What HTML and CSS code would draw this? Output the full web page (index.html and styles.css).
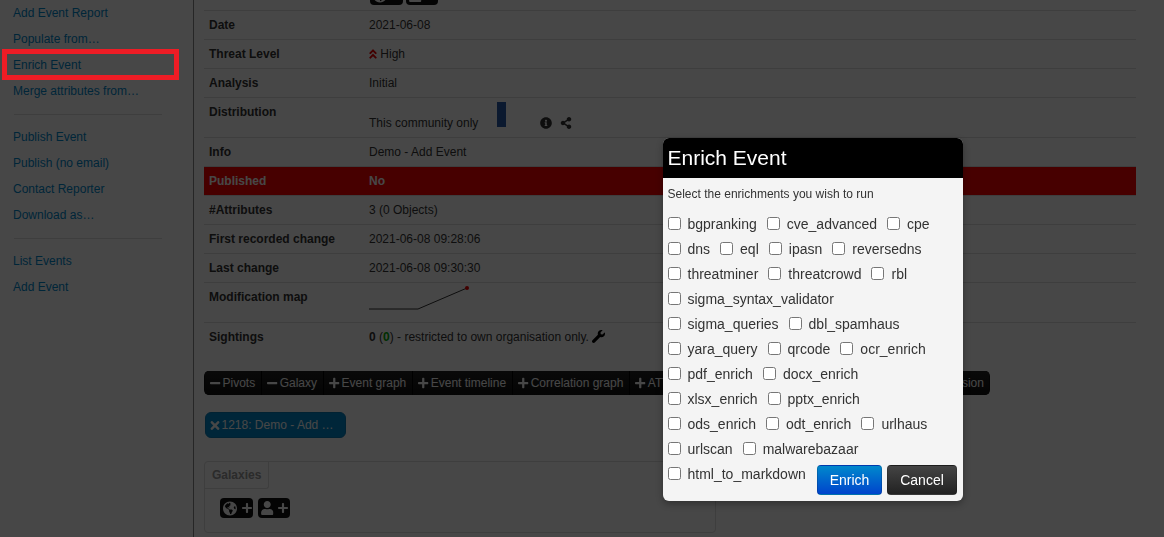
FILE: index.html
```html
<!DOCTYPE html>
<html lang="en">
<head>
<meta charset="utf-8">
<title>Enrich Event</title>
<link rel="stylesheet" href="styles.css">
</head>
<body>
<svg class="sprite" xmlns="http://www.w3.org/2000/svg">
  <symbol id="i-times" viewBox="0 0 352 512"><path d="M242.72 256l100.07-100.07c12.28-12.28 12.28-32.19 0-44.48l-22.24-22.24c-12.28-12.28-32.19-12.28-44.48 0L176 189.28 75.93 89.21c-12.28-12.28-32.19-12.28-44.48 0L9.21 111.45c-12.28 12.28-12.28 32.19 0 44.48L109.28 256 9.21 356.07c-12.28 12.28-12.28 32.19 0 44.48l22.24 22.24c12.28 12.28 32.2 12.28 44.48 0L176 322.72l100.07 100.07c12.28 12.28 32.2 12.28 44.48 0l22.24-22.24c12.28-12.28 12.28-32.19 0-44.48L242.72 256z"/></symbol>
  <symbol id="i-plus" viewBox="0 0 448 512"><path d="M416 208H272V64c0-17.67-14.33-32-32-32h-32c-17.67 0-32 14.33-32 32v144H32c-17.67 0-32 14.33-32 32v32c0 17.67 14.33 32 32 32h144v144c0 17.67 14.33 32 32 32h32c17.67 0 32-14.33 32-32V304h144c17.67 0 32-14.33 32-32v-32c0-17.67-14.33-32-32-32z"/></symbol>
  <symbol id="i-minus" viewBox="0 0 448 512"><path d="M416 208H32c-17.67 0-32 14.33-32 32v32c0 17.67 14.33 32 32 32h384c17.67 0 32-14.33 32-32v-32c0-17.67-14.33-32-32-32z"/></symbol>
  <symbol id="i-user" viewBox="0 0 448 512"><path d="M224 256c70.7 0 128-57.3 128-128S294.7 0 224 0 96 57.3 96 128s57.3 128 128 128zm89.6 32h-16.7c-22.2 10.2-46.9 16-72.9 16s-50.6-5.8-72.9-16h-16.7C60.2 288 0 348.2 0 422.4V464c0 26.5 21.5 48 48 48h352c26.5 0 48-21.5 48-48v-41.6c0-74.2-60.2-134.4-134.4-134.4z"/></symbol>
  <symbol id="i-info" viewBox="0 0 512 512"><path d="M256 8C119.043 8 8 119.083 8 256c0 136.997 111.043 248 248 248s248-111.003 248-248C504 119.083 392.957 8 256 8zm0 110c23.196 0 42 18.804 42 42s-18.804 42-42 42-42-18.804-42-42 18.804-42 42-42zm56 254c0 6.627-5.373 12-12 12h-88c-6.627 0-12-5.373-12-12v-24c0-6.627 5.373-12 12-12h12v-64h-12c-6.627 0-12-5.373-12-12v-24c0-6.627 5.373-12 12-12h64c6.627 0 12 5.373 12 12v100h12c6.627 0 12 5.373 12 12v24z"/></symbol>
  <symbol id="i-share" viewBox="0 0 448 512"><path d="M352 320c-22.608 0-43.387 7.819-59.79 20.895l-102.486-64.054a96.551 96.551 0 0 0 0-41.683l102.486-64.054C308.613 184.181 329.392 192 352 192c53.019 0 96-42.981 96-96S405.019 0 352 0s-96 42.981-96 96c0 7.158.79 14.13 2.276 20.841L155.79 180.895C139.387 167.819 118.608 160 96 160c-53.019 0-96 42.981-96 96s42.981 96 96 96c22.608 0 43.387-7.819 59.79-20.895l102.486 64.054A96.301 96.301 0 0 0 256 416c0 53.019 42.981 96 96 96s96-42.981 96-96-42.981-96-96-96z"/></symbol>
  <symbol id="i-angles" viewBox="0 0 320 512"><path d="M177 255.7l136 136c9.4 9.4 9.4 24.6 0 33.9l-22.6 22.6c-9.4 9.4-24.6 9.4-33.9 0L160 351.9l-96.4 96.4c-9.4 9.4-24.6 9.4-33.9 0L7 425.7c-9.4-9.4-9.4-24.6 0-33.9l136-136c9.4-9.5 24.6-9.5 34-.1zm-34-192L7 199.7c-9.4 9.4-9.4 24.6 0 33.9l22.6 22.6c9.4 9.4 24.6 9.4 33.9 0l96.4-96.4 96.4 96.4c9.4 9.4 24.6 9.4 33.9 0l22.6-22.6c9.4-9.4 9.4-24.6 0-33.9l-136-136c-9.2-9.4-24.4-9.4-33.8 0z"/></symbol>
  <symbol id="i-wrench" viewBox="0 0 512 512"><path d="M507.73 109.1c-2.24-9.03-13.54-12.09-20.12-5.51l-74.36 74.36-67.88-11.31-11.31-67.88 74.36-74.36c6.62-6.62 3.43-17.9-5.66-20.16-47.38-11.74-99.55.91-136.58 37.93-39.64 39.64-50.55 97.1-34.05 147.2L18.74 402.76c-24.99 24.99-24.99 65.51 0 90.5 24.99 24.99 65.51 24.99 90.5 0l213.21-213.21c50.12 16.71 107.47 5.68 147.37-34.22 37.07-37.07 49.7-89.32 37.91-136.73z"/></symbol>
  <symbol id="i-globe" viewBox="0 0 496 512"><path d="M248 8C111.03 8 0 119.03 0 256s111.03 248 248 248 248-111.03 248-248S384.97 8 248 8zm82.29 357.6c-3.9 3.88-7.99 7.95-11.31 11.28-2.99 3-5.1 6.7-6.17 10.71-1.51 5.66-2.73 11.38-4.77 16.87l-17.39 46.85c-13.76 3-28 4.69-42.65 4.69v-27.38c1.69-12.62-7.64-36.26-22.63-51.25-6-6-9.37-14.14-9.37-22.63v-32.01c0-11.64-6.27-22.34-16.46-27.97-14.37-7.95-34.81-19.06-48.81-26.11-11.48-5.78-22.1-13.14-31.65-21.75l-.8-.72a114.792 114.792 0 0 1-18.06-20.74c-9.38-13.77-24.66-36.42-34.59-51.14 20.47-45.5 57.36-82.04 103.2-101.89l24.01 12.01C203.48 89.74 216 82.01 216 70.11v-11.3c7.99-1.29 16.12-2.11 24.39-2.42l28.3 28.3c6.25 6.25 6.25 16.38 0 22.63L264 112l-10.34 10.34c-3.12 3.12-3.12 8.19 0 11.31l4.69 4.69c3.12 3.12 3.12 8.19 0 11.31l-8 8a8.008 8.008 0 0 1-5.66 2.34h-8.99c-2.08 0-4.08.81-5.58 2.27l-9.92 9.65a8.008 8.008 0 0 0-1.58 9.31l15.59 31.19c2.66 5.32-1.21 11.58-7.15 11.58h-5.64c-1.93 0-3.79-.7-5.24-1.96l-9.28-8.06a16.017 16.017 0 0 0-15.55-3.1l-31.17 10.39a11.95 11.95 0 0 0-8.17 11.34c0 4.53 2.56 8.66 6.61 10.69l11.08 5.54c9.41 4.71 19.79 7.16 30.31 7.16s22.59 27.29 32 32h66.75c8.49 0 16.62 3.37 22.63 9.37l13.69 13.69a30.503 30.503 0 0 1 8.93 21.57 46.536 46.536 0 0 1-13.72 32.98zM417 274.25c-5.79-1.45-10.84-5-14.15-9.97l-17.98-26.97a23.97 23.97 0 0 1 0-26.62l19.59-29.38c2.32-3.47 5.5-6.29 9.24-8.15l12.98-6.49C440.2 193.59 448 223.87 448 256c0 8.67-.74 17.16-1.82 25.54L417 274.25z"/></symbol>
</svg>

<div class="page">
  <nav class="sidebar">
    <a class="nav-link" href="#">Add Event Report</a>
    <a class="nav-link" href="#">Populate from…</a>
    <a class="nav-link" href="#">Enrich Event</a>
    <a class="nav-link" href="#">Merge attributes from…</a>
    <hr class="nav-divider">
    <a class="nav-link" href="#">Publish Event</a>
    <a class="nav-link" href="#">Publish (no email)</a>
    <a class="nav-link" href="#">Contact Reporter</a>
    <a class="nav-link" href="#">Download as…</a>
    <hr class="nav-divider">
    <a class="nav-link" href="#">List Events</a>
    <a class="nav-link" href="#">Add Event</a>
  </nav>

  <main class="content">
    <div class="meta">
      <div class="clipped-row">
        <span class="gbtn gbtn-globe"><svg class="ic ic-g"><use href="#i-globe"/></svg><svg class="ic ic-gp"><use href="#i-plus"/></svg></span>
        <span class="gbtn gbtn-user"><svg class="ic ic-g"><use href="#i-user"/></svg><svg class="ic ic-gp"><use href="#i-plus"/></svg></span>
      </div>
      <div class="row"><div class="key">Date</div><div class="val">2021-06-08</div></div>
      <div class="row"><div class="key">Threat Level</div><div class="val"><svg class="ic ic-threat"><use href="#i-angles"/></svg> High</div></div>
      <div class="row"><div class="key">Analysis</div><div class="val">Initial</div></div>
      <div class="row row-dist">
        <div class="key">Distribution</div>
        <div class="val val-dist">
          <span>This community only</span>
          <span class="dist-bar"></span>
          <svg class="ic ic-info"><use href="#i-info"/></svg>
          <svg class="ic ic-share"><use href="#i-share"/></svg>
        </div>
      </div>
      <div class="row"><div class="key">Info</div><div class="val">Demo - Add Event</div></div>
      <div class="row row-published"><div class="key">Published</div><div class="val val-bold">No</div></div>
      <div class="row"><div class="key">#Attributes</div><div class="val">3 (0 Objects)</div></div>
      <div class="row"><div class="key">First recorded change</div><div class="val">2021-06-08 09:28:06</div></div>
      <div class="row"><div class="key">Last change</div><div class="val">2021-06-08 09:30:30</div></div>
      <div class="row row-map">
        <div class="key">Modification map</div>
        <div class="val">
          <svg class="spark" viewBox="0 0 100 24" width="100" height="24">
            <polyline points="0,22 49,22 98,1" fill="none" stroke="#333" stroke-width="1"/>
            <circle cx="98" cy="1" r="2" fill="#e00"/>
          </svg>
        </div>
      </div>
      <div class="row row-last"><div class="key">Sightings</div><div class="val"><b>0</b> (<b class="green">0</b>) - restricted to own organisation only. <svg class="ic ic-wrench"><use href="#i-wrench"/></svg></div></div>
    </div>

    <div class="toolbar">
      <span class="tool"><svg class="ic ic-tool"><use href="#i-minus"/></svg>Pivots</span>
      <span class="tool"><svg class="ic ic-tool"><use href="#i-minus"/></svg>Galaxy</span>
      <span class="tool"><svg class="ic ic-tool"><use href="#i-plus"/></svg>Event graph</span>
      <span class="tool"><svg class="ic ic-tool"><use href="#i-plus"/></svg>Event timeline</span>
      <span class="tool"><svg class="ic ic-tool"><use href="#i-plus"/></svg>Correlation graph</span>
      <span class="tool"><svg class="ic ic-tool"><use href="#i-plus"/></svg>ATT&amp;CK matrix</span>
      <span class="tool"><svg class="ic ic-tool"><use href="#i-plus"/></svg>Event reports</span>
      <span class="tool"><svg class="ic ic-tool"><use href="#i-plus"/></svg>Attributes</span>
      <span class="tool"><svg class="ic ic-tool"><use href="#i-plus"/></svg>Discussion</span>
    </div>

    <div class="pill"><svg class="ic ic-times"><use href="#i-times"/></svg>1218: Demo - Add …</div>

    <section class="galaxies">
      <div class="tab">Galaxies</div>
      <div class="galaxy-btns">
        <span class="gbtn gbtn-globe"><svg class="ic ic-g"><use href="#i-globe"/></svg><svg class="ic ic-gp"><use href="#i-plus"/></svg></span>
        <span class="gbtn gbtn-user"><svg class="ic ic-g"><use href="#i-user"/></svg><svg class="ic ic-gp"><use href="#i-plus"/></svg></span>
      </div>
    </section>
  </main>
</div>

<div class="backdrop"></div>
<div class="highlight"></div>

<div class="modal">
  <h3 class="modal-title">Enrich Event</h3>
  <div class="modal-body">
    <p class="modal-lead">Select the enrichments you wish to run</p>
    <div class="checks">
      <div class="check-row"><label class="check"><input type="checkbox">bgpranking</label><label class="check"><input type="checkbox">cve_advanced</label><label class="check"><input type="checkbox">cpe</label></div>
      <div class="check-row"><label class="check"><input type="checkbox">dns</label><label class="check"><input type="checkbox">eql</label><label class="check"><input type="checkbox">ipasn</label><label class="check"><input type="checkbox">reversedns</label></div>
      <div class="check-row"><label class="check"><input type="checkbox">threatminer</label><label class="check"><input type="checkbox">threatcrowd</label><label class="check"><input type="checkbox">rbl</label></div>
      <div class="check-row"><label class="check"><input type="checkbox">sigma_syntax_validator</label></div>
      <div class="check-row"><label class="check"><input type="checkbox">sigma_queries</label><label class="check"><input type="checkbox">dbl_spamhaus</label></div>
      <div class="check-row"><label class="check"><input type="checkbox">yara_query</label><label class="check"><input type="checkbox">qrcode</label><label class="check"><input type="checkbox">ocr_enrich</label></div>
      <div class="check-row"><label class="check"><input type="checkbox">pdf_enrich</label><label class="check"><input type="checkbox">docx_enrich</label></div>
      <div class="check-row"><label class="check"><input type="checkbox">xlsx_enrich</label><label class="check"><input type="checkbox">pptx_enrich</label></div>
      <div class="check-row"><label class="check"><input type="checkbox">ods_enrich</label><label class="check"><input type="checkbox">odt_enrich</label><label class="check"><input type="checkbox">urlhaus</label></div>
      <div class="check-row"><label class="check"><input type="checkbox">urlscan</label><label class="check"><input type="checkbox">malwarebazaar</label></div>
      <div class="check-row">
        <label class="check"><input type="checkbox">html_to_markdown</label>
        <div class="actions">
          <button class="btn btn-primary" type="button">Enrich</button>
          <button class="btn btn-inverse" type="button">Cancel</button>
        </div>
      </div>
    </div>
  </div>
</div>
</body>
</html>
```

FILE: styles.css
```css
* { box-sizing: border-box; }
html, body { margin: 0; padding: 0; height: 100%; overflow: hidden; }
body {
  font-family: "Liberation Sans", Arial, sans-serif;
  font-size: 12px;
  color: #333;
  background: #fff;
}
.sprite { display: none; }
.ic { display: inline-block; fill: currentColor; flex: none; }

.page { display: flex; height: 537px; overflow: hidden; }

/* sidebar */
.sidebar {
  width: 194px;
  flex: none;
  border-right: 1px solid #888;
  display: flex;
  flex-direction: column;
  padding-left: 13px;
}
.nav-link {
  display: block;
  height: 26px;
  line-height: 26px;
  color: #08c;
  text-decoration: none;
}
.nav-divider {
  width: 148px;
  height: 1px;
  border: 0;
  margin: 10px 0 9px 1px;
  background: #ddd;
  flex: none;
}

/* main */
.content { width: 942px; padding-left: 10px; flex: none; }
.meta { width: 932px; }
.clipped-row {
  height: 10px;
  display: flex;
  align-items: flex-end;
  overflow: hidden;
  padding: 0 0 5px 166px;
  gap: 3px;
}
.clipped-row .gbtn { flex: none; }

.row {
  display: flex;
  height: 29px;
  line-height: 28px;
  border-top: 1px solid #ddd;
}
.key { width: 165px; padding-left: 5px; font-weight: bold; flex: none; }
.val { flex: 1; display: block; }
.val-bold { font-weight: bold; }
.row-dist { height: 40px; }
.val-dist { display: flex; align-items: flex-end; height: 39px; line-height: 18px; padding-bottom: 5px; }
.dist-bar { width: 9px; height: 25px; background: #2a5aa8; margin-left: 19px; align-self: flex-start; margin-top: 4px; }
.ic-info { width: 12px; height: 12px; margin-left: 34px; margin-bottom: 3px; }
.ic-share { width: 12px; height: 12px; margin-left: 8px; margin-bottom: 3px; }
.row-published { background: #f00; color: #fff; }
.row-map { height: 40px; }
.spark { display: block; margin-top: 4px; overflow: visible; }
.green { color: #0a0; }
.ic-threat { width: 8px; height: 12px; color: #e00; vertical-align: -2px; }
.ic-wrench { width: 13px; height: 13px; vertical-align: -2px; color: #000; }

/* toolbar */
.toolbar {
  display: inline-flex;
  vertical-align: top;
  margin-top: 20px;
  height: 24px;
  padding: 0 1px 0 .5px;
  background: #111;
  border-radius: 5px;
  color: #fff;
  overflow: hidden;
}
.tool {
  display: flex;
  align-items: center;
  padding: 0 5.5px;
  height: 24px;
  white-space: nowrap;
  background: linear-gradient(#222, #111);
  border-right: 1px solid #000;
}
.tool:last-child { border-right: 0; }
.ic-tool { width: 10.5px; height: 12px; margin-right: 2px; }

.pill {
  display: flex;
  align-items: center;
  width: 141px;
  height: 26px;
  margin: 17px 0 0 1px;
  padding-left: 4px;
  background: #08c;
  color: #fff;
  border-radius: 6px;
  border: 1px solid #0a7ab5;
}
.ic-times { width: 10px; height: 13px; margin-right: 1.5px; }

.galaxies {
  width: 512px;
  height: 72px;
  margin-top: 23px;
  border: 1px solid #ddd;
  border-radius: 4px;
}
.tab {
  width: 64px;
  height: 27px;
  line-height: 26px;
  padding-left: 7px;
  font-weight: bold;
  color: #999;
  border-right: 1px solid #ddd;
  border-bottom: 1px solid #ddd;
  border-bottom-right-radius: 3px;
}
.galaxy-btns { display: flex; gap: 5px; padding: 9px 0 0 15px; }
.gbtn {
  display: flex;
  align-items: center;
  height: 20px;
  padding-left: 3px;
  background: #111;
  border-radius: 4px;
  color: #fff;
}
.gbtn-globe { width: 33px; gap: 5px; }
.gbtn-user { width: 32px; gap: 4px; }
.gbtn-globe .ic-g { width: 14px; height: 15px; }
.gbtn-user .ic-g { width: 12.5px; height: 14px; }
.ic-gp { width: 10px; height: 12px; }

/* overlay */
.backdrop {
  position: fixed;
  inset: 0;
  background: rgba(0, 0, 0, .72);
}
.highlight {
  position: absolute;
  left: 2px;
  top: 49px;
  width: 177px;
  height: 31px;
  border: 5px solid #ee1c25;
}

.modal {
  position: absolute;
  left: 663px;
  top: 138px;
  width: 300px;
  height: 363px;
  background: #f4f4f4;
  border-radius: 6px;
  overflow: hidden;
  box-shadow: 0 3px 7px rgba(0, 0, 0, .3);
}
.modal-title {
  margin: 0;
  height: 40px;
  line-height: 40px;
  padding-left: 4.5px;
  background: #000;
  color: #fff;
  font-size: 21px;
  font-weight: normal;
}
.modal-body { padding: 0 5px 0 4.5px; }
.modal-lead { margin: 0; padding-top: 9px; height: 33.5px; line-height: 15px; color: #333; }
.check-row {
  display: flex;
  gap: 10px;
  height: 25px;
  font-size: 14px;
  color: #333;
}
.check { display: flex; align-items: center; gap: 7px; height: 25px; white-space: nowrap; }
.check input { width: 13px; height: 13px; margin: -2px 0 0 0; flex: none; }
.actions { display: flex; gap: 5px; margin-left: auto; padding-right: 1px; margin-top: 3px; flex: none; }
.btn {
  font-family: inherit;
  font-size: 14px;
  height: 30px;
  padding: 0;
  border-radius: 4px;
  color: #fff;
  border: 1px solid rgba(0,0,0,.15);
}
.btn-primary { width: 65px; background: linear-gradient(#08c, #04c); }
.btn-inverse { width: 70px; background: linear-gradient(#444, #222); }
```
